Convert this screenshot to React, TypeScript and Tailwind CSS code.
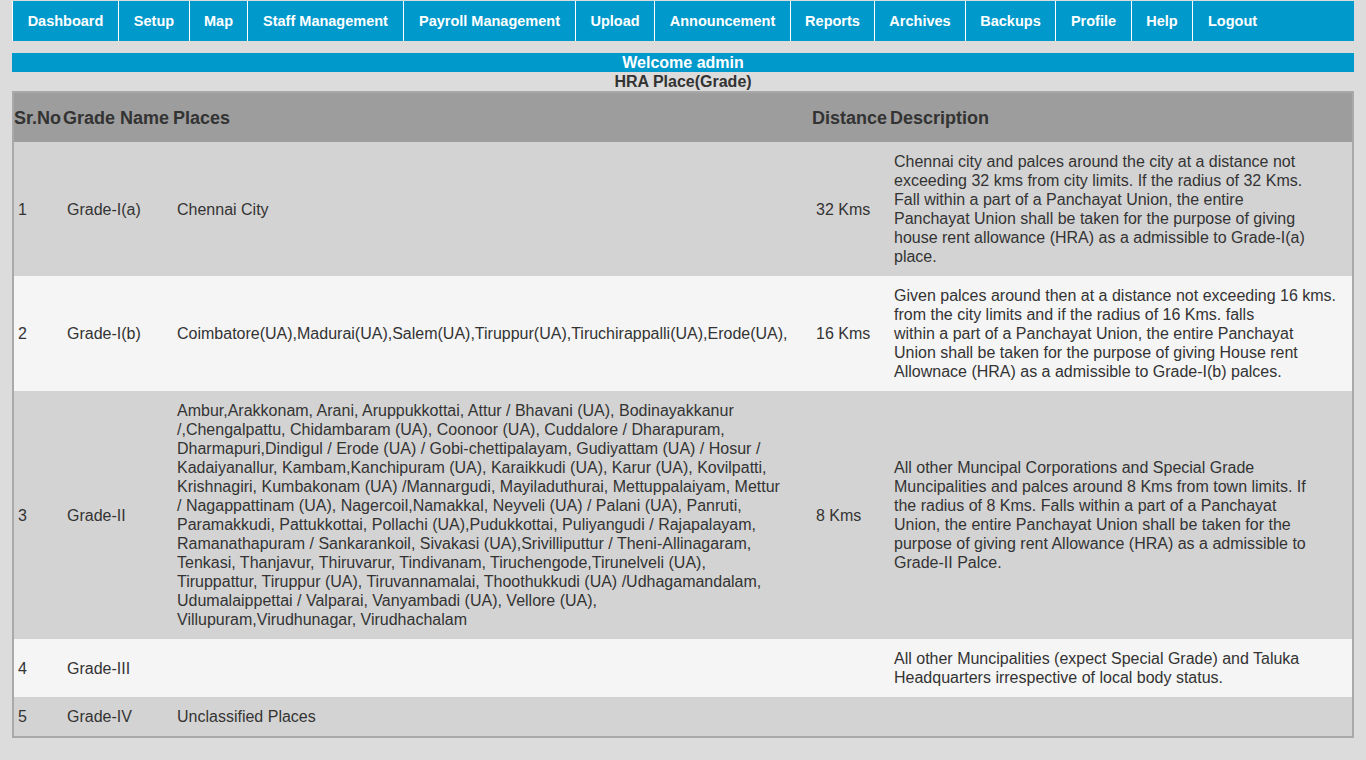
const menu: [string, string][] = [
  ['Dashboard', 'w-[106px]'],
  ['Setup', 'w-[71px]'],
  ['Map', 'w-[58px]'],
  ['Staff Management', 'w-[156px]'],
  ['Payroll Management', 'w-[172px]'],
  ['Upload', 'w-[79px]'],
  ['Announcement', 'w-[136px]'],
  ['Reports', 'w-[84px]'],
  ['Archives', 'w-[91px]'],
  ['Backups', 'w-[90px]'],
  ['Profile', 'w-[76px]'],
  ['Help', 'w-[61px]'],
  ['Logout', 'flex-1 pl-[15px]'],
];

type Row = {
  no: string;
  grade: string;
  places: string[];
  distance: string;
  description: string[];
};

const rows: Row[] = [
  {
    no: '1',
    grade: 'Grade-I(a)',
    places: ['Chennai City'],
    distance: '32 Kms',
    description: [
      'Chennai city and palces around the city at a distance not',
      'exceeding 32 kms from city limits. If the radius of 32 Kms.',
      'Fall within a part of a Panchayat Union, the entire',
      'Panchayat Union shall be taken for the purpose of giving',
      'house rent allowance (HRA) as a admissible to Grade-I(a)',
      'place.',
    ],
  },
  {
    no: '2',
    grade: 'Grade-I(b)',
    places: ['Coimbatore(UA),Madurai(UA),Salem(UA),Tiruppur(UA),Tiruchirappalli(UA),Erode(UA),'],
    distance: '16 Kms',
    description: [
      'Given palces around then at a distance not exceeding 16 kms.',
      'from the city limits and if the radius of 16 Kms. falls',
      'within a part of a Panchayat Union, the entire Panchayat',
      'Union shall be taken for the purpose of giving House rent',
      'Allownace (HRA) as a admissible to Grade-I(b) palces.',
    ],
  },
  {
    no: '3',
    grade: 'Grade-II',
    places: [
      'Ambur,Arakkonam, Arani, Aruppukkottai, Attur / Bhavani (UA), Bodinayakkanur',
      '/,Chengalpattu, Chidambaram (UA), Coonoor (UA), Cuddalore / Dharapuram,',
      'Dharmapuri,Dindigul / Erode (UA) / Gobi-chettipalayam, Gudiyattam (UA) / Hosur /',
      'Kadaiyanallur, Kambam,Kanchipuram (UA), Karaikkudi (UA), Karur (UA), Kovilpatti,',
      'Krishnagiri, Kumbakonam (UA) /Mannargudi, Mayiladuthurai, Mettuppalaiyam, Mettur',
      '/ Nagappattinam (UA), Nagercoil,Namakkal, Neyveli (UA) / Palani (UA), Panruti,',
      'Paramakkudi, Pattukkottai, Pollachi (UA),Pudukkottai, Puliyangudi / Rajapalayam,',
      'Ramanathapuram / Sankarankoil, Sivakasi (UA),Srivilliputtur / Theni-Allinagaram,',
      'Tenkasi, Thanjavur, Thiruvarur, Tindivanam, Tiruchengode,Tirunelveli (UA),',
      'Tiruppattur, Tiruppur (UA), Tiruvannamalai, Thoothukkudi (UA) /Udhagamandalam,',
      'Udumalaippettai / Valparai, Vanyambadi (UA), Vellore (UA),',
      'Villupuram,Virudhunagar, Virudhachalam',
    ],
    distance: '8 Kms',
    description: [
      'All other Muncipal Corporations and Special Grade',
      'Muncipalities and palces around 8 Kms from town limits. If',
      'the radius of 8 Kms. Falls within a part of a Panchayat',
      'Union, the entire Panchayat Union shall be taken for the',
      'purpose of giving rent Allowance (HRA) as a admissible to',
      'Grade-II Palce.',
    ],
  },
  {
    no: '4',
    grade: 'Grade-III',
    places: [],
    distance: '',
    description: [
      'All other Muncipalities (expect Special Grade) and Taluka',
      'Headquarters irrespective of local body status.',
    ],
  },
  {
    no: '5',
    grade: 'Grade-IV',
    places: ['Unclassified Places'],
    distance: '',
    description: [],
  },
];

function Lines({ lines }: { lines: string[] }) {
  return (
    <>
      {lines.map((l, i) => (
        <span key={i} className="block whitespace-nowrap">
          {l}
        </span>
      ))}
    </>
  );
}

export default function App() {
  return (
    <div className="min-h-[760px] bg-[#dcdcdc] font-['Liberation_Sans',Arial,sans-serif] text-[#333]">
      <div className="px-3 pt-px">
        <ul className="flex h-10 bg-[#0099cc]">
          {menu.map(([m, w]) => (
            <li
              key={m}
              className={
                'flex shrink-0 items-center border-l border-white pt-px text-[14.5px] font-bold whitespace-nowrap text-white ' +
                w +
                (m === 'Logout' ? '' : ' justify-center')
              }
            >
              {m}
            </li>
          ))}
        </ul>

        <div className="mt-3 h-[19px] bg-[#0099cc] text-center text-base font-bold leading-[19px] text-white">
          Welcome admin
        </div>
        <div className="h-[19px] text-center text-base font-bold leading-[19px]">HRA Place(Grade)</div>

        <table className="w-full table-fixed border-collapse border-2 border-[#a9a9a9] text-base leading-[19px]">
          <colgroup>
            <col className="w-[50px]" />
            <col className="w-[110px]" />
            <col className="w-[639px]" />
            <col className="w-[78px]" />
            <col />
          </colgroup>
          <thead>
            <tr className="h-[50px] bg-[#9d9d9d] text-left text-lg font-bold">
              <th className="p-0 whitespace-nowrap">Sr.No</th>
              <th className="p-0 whitespace-nowrap">Grade Name</th>
              <th className="p-0">Places</th>
              <th className="p-0 whitespace-nowrap">Distance</th>
              <th className="p-0">Description</th>
            </tr>
          </thead>
          <tbody>
            {rows.map((r, i) => (
              <tr key={r.no} className={i % 2 === 0 ? 'bg-[#d3d3d3]' : 'bg-[#f5f5f5]'}>
                <td className="px-1 py-[10px] align-middle">{r.no}</td>
                <td className="px-1 py-[10px] align-middle whitespace-nowrap">{r.grade}</td>
                <td className="px-1 py-[10px] align-middle">
                  <Lines lines={r.places} />
                </td>
                <td className="px-1 py-[10px] align-middle whitespace-nowrap">{r.distance}</td>
                <td className="px-1 py-[10px] align-middle">
                  <Lines lines={r.description} />
                </td>
              </tr>
            ))}
          </tbody>
        </table>
      </div>
    </div>
  );
}
